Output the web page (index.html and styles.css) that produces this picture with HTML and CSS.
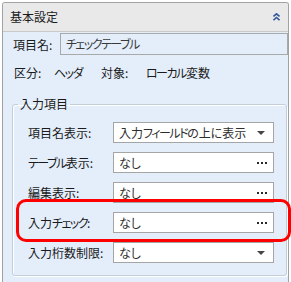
FILE: index.html
```html
<!DOCTYPE html>
<html lang="ja">
<head>
  <meta charset="UTF-8">
  <title>基本設定</title>
  <link rel="stylesheet" href="styles.css">
</head>
<body>
  <div class="panel">
    <div class="panel-head">
      <span class="panel-title">基本設定</span>
      <svg class="collapse" width="7" height="8" viewBox="0 0 7 8">
        <path d="M0.5 3.5 L3.5 0.8 L6.5 3.5 M0.5 7.2 L3.5 4.5 L6.5 7.2" fill="none" stroke="#34569a" stroke-width="1.6"/>
      </svg>
    </div>

    <div class="panel-body">
      <div class="name-row">
        <label class="name-label">項目名:</label>
        <div class="name-input"><span class="kana">チェックテーブル</span></div>
      </div>

      <div class="info-row">
        <span class="info-key">区分:</span>
        <span class="info-val kana">ヘッダ</span>
        <span class="info-key wide">対象:</span>
        <span class="info-val last"><span class="kana">ローカル</span>変数</span>
      </div>

      <fieldset class="group">
        <legend>入力項目</legend>

        <div class="field">
          <span class="field-label">項目名表示:</span>
          <div class="field-box">
            <span class="field-value">入力<span class="kana">フィールド</span>の上に表示</span>
            <span class="arrow"></span>
          </div>
        </div>

        <div class="field">
          <span class="field-label"><span class="kana">テーブル</span>表示:</span>
          <div class="field-box">
            <span class="field-value">なし</span>
            <span class="dots"><i></i><i></i><i></i></span>
          </div>
        </div>

        <div class="field">
          <span class="field-label">編集表示:</span>
          <div class="field-box">
            <span class="field-value">なし</span>
            <span class="dots"><i></i><i></i><i></i></span>
          </div>
        </div>

        <div class="field marked">
          <span class="field-label">入力<span class="kana">チェック</span>:</span>
          <div class="field-box">
            <span class="field-value">なし</span>
            <span class="dots"><i></i><i></i><i></i></span>
          </div>
        </div>

        <div class="field">
          <span class="field-label">入力桁数制限:</span>
          <div class="field-box">
            <span class="field-value">なし</span>
            <span class="arrow"></span>
          </div>
        </div>
      </fieldset>
    </div>
  </div>
</body>
</html>
```

FILE: styles.css
```css
/* Reset */
* {
  margin: 0;
  padding: 0;
  box-sizing: border-box;
}

body {
  font-family: "Noto Sans CJK JP", "Noto Sans", sans-serif;
  font-size: 12px;
  font-feature-settings: "palt";
  color: #1a1a1a;
  background: #ffffff;
  padding: 2px 0 0 2px;
  height: 282px;
  overflow: hidden;
}

/* Katakana is much narrower in the original UI font */
.kana {
  letter-spacing: -1.5px;
}

/* Panel */
.panel {
  width: 287px;
  height: 300px;
  border: 1px solid #a2a2a2;
  border-bottom: none;
  border-radius: 3px 3px 0 0;
  background: #e4eefb;
}

.panel-head {
  height: 29px;
  display: flex;
  align-items: center;
  justify-content: space-between;
  padding: 0 8px 0 7px;
  background: #e9e9e9;
  border-bottom: 1px solid #c9c9c9;
  border-radius: 2px 2px 0 0;
}

.panel-title {
  line-height: 14px;
}

.panel-body {
  padding: 1px 0 0 9px;
}

/* Item name */
.name-row {
  display: flex;
  align-items: center;
  padding-left: 1px;
}

.name-label {
  width: 47px;
}

.name-input {
  flex: 1;
  height: 22px;
  line-height: 20px;
  padding-left: 5px;
  border: 1px solid #a9a9a9;
  color: #3a3a3a;
}

/* Info row */
.info-row {
  display: flex;
  line-height: 14px;
  margin-top: 11px;
  padding-left: 2px;
  white-space: nowrap;
}

.info-key {
  width: 40px;
}

.info-key.wide {
  width: 45px;
}

.info-val {
  width: 47px;
}

.info-val.last {
  width: auto;
}

/* Group */
.group {
  margin: 17px 2px 0 0;
  padding: 11px 12px 12px 15px;
  border: 1px solid #c3cedb;
  border-radius: 3px;
  box-shadow: inset 1px 1px 0 #ffffff, 1px 1px 0 #ffffff;
}

.group legend {
  margin-left: -10px;
  padding: 0 2px;
  line-height: 14px;
}

.field {
  display: flex;
  align-items: center;
  margin-bottom: 9px;
}

.field:last-child {
  margin-bottom: 0;
}

.field-label {
  width: 85px;
}

.field-box {
  width: 161px;
  height: 21px;
  display: flex;
  align-items: center;
  justify-content: space-between;
  padding: 0 6px 0 5px;
  background: #ffffff;
  border: 1px solid #a5a5a5;
}

.field-value {
  color: #2e2e2e;
  line-height: 14px;
}

.arrow {
  width: 0;
  height: 0;
  margin-right: 2px;
  border-left: 4px solid transparent;
  border-right: 4px solid transparent;
  border-top: 4px solid #454545;
}

.dots {
  display: flex;
  gap: 2px;
}

.dots i {
  width: 2px;
  height: 2px;
  background: #2a2a2a;
}

/* Highlight annotation around the row */
.marked {
  position: relative;
}

.marked::after {
  content: "";
  position: absolute;
  left: -12px;
  right: -17px;
  top: -13px;
  bottom: -9px;
  border: 3px solid #ff0000;
  border-radius: 10px;
}
```
